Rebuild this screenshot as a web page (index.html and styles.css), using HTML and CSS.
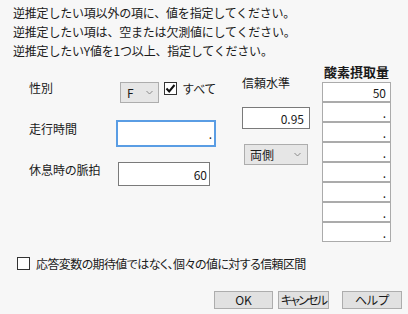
FILE: index.html
```html
<!DOCTYPE html>
<html lang="ja">
  <head>
    <meta charset="UTF-8" />
    <meta name="viewport" content="width=device-width, initial-scale=1.0" />
    <title>逆推定</title>
    <link rel="stylesheet" href="styles.css">
  </head>
  <body>
    <div class="dialog">
      <div class="intro">
        <p>逆推定したい項以外の項に、値を指定してください。</p>
        <p>逆推定したい項は、空または欠測値にしてください。</p>
        <p>逆推定したいY値を1つ以上、指定してください。</p>
      </div>

      <div class="form">
        <div class="fields">
          <div class="row row-sex">
            <span class="label">性別</span>
            <div class="select select-f">
              <span>F</span>
              <svg class="chevron" width="7" height="5" viewBox="0 0 7 5"><path d="M0.5 1 L3.5 4 L6.5 1" fill="none" stroke="#8a8a8a" stroke-width="1"/></svg>
            </div>
            <span class="check-wrap">
              <span class="check">
                <svg width="11" height="11" viewBox="0 0 11 11"><path d="M1.5 5.5 L4.2 8.5 L9.5 2" fill="none" stroke="#111" stroke-width="2"/></svg>
              </span>
              <span>すべて</span>
            </span>
          </div>
          <div class="row row-time">
            <span class="label">走行時間</span>
            <input class="field field-focus" type="text" value=".">
          </div>
          <div class="row row-pulse">
            <span class="label">休息時の脈拍</span>
            <input class="field field-pulse" type="text" value="60">
          </div>
        </div>

        <div class="conf">
          <div class="conf-label">信頼水準</div>
          <input class="field field-conf" type="text" value="0.95">
          <div class="select select-side">
            <span>両側</span>
            <svg class="chevron" width="7" height="5" viewBox="0 0 7 5"><path d="M0.5 1 L3.5 4 L6.5 1" fill="none" stroke="#8a8a8a" stroke-width="1"/></svg>
          </div>
        </div>

        <div class="yvals">
          <div class="yvals-title">酸素摂取量</div>
          <div class="cells">
            <input class="cell" type="text" value="50">
            <input class="cell" type="text" value=".">
            <input class="cell" type="text" value=".">
            <input class="cell" type="text" value=".">
            <input class="cell" type="text" value=".">
            <input class="cell" type="text" value=".">
            <input class="cell" type="text" value=".">
            <input class="cell" type="text" value=".">
          </div>
        </div>
      </div>

      <div class="option">
        <span class="check"></span>
        <span class="option-text">応答変数の期待値ではなく、個々の値に対する信頼区間</span>
      </div>

      <div class="actions">
        <button class="btn btn-ok">OK</button>
        <button class="btn btn-cancel">キャンセル</button>
        <button class="btn btn-help">ヘルプ</button>
      </div>
    </div>
  </body>
</html>
```

FILE: styles.css
```css
body {
  margin: 0;
  padding: 0;
  background-color: #f7f7f7;
  color: #1a1a1a;
  font-family: "Noto Sans CJK JP", "Noto Sans", sans-serif;
  font-size: 12px;
  font-feature-settings: "palt";
}

.dialog {
  width: 408px;
  height: 314px;
}

.intro {
  padding: 3px 0 0 13px;
  line-height: 19px;
  font-feature-settings: normal;
  letter-spacing: -0.2px;
}

.intro p {
  margin: 0;
}

.form {
  display: flex;
  padding-left: 29px;
  height: 182px;
}

/* left column */
.fields {
  width: 213px;
  padding-top: 21px;
}

.row {
  display: flex;
  align-items: center;
}

.label {
  width: 87px;
  line-height: 14px;
  margin-bottom: 9px;
}

.row-time {
  margin-top: 16px;
}

.row-pulse {
  margin-top: 15px;
}

.select {
  display: flex;
  align-items: center;
  justify-content: space-between;
  box-sizing: border-box;
  height: 21px;
  border: 1px solid #adadad;
  background: #e6e6e6;
  padding: 0 5px 0 6px;
}

.select-f {
  width: 39px;
  margin-left: 4px;
}

.check-wrap {
  display: flex;
  align-items: center;
  gap: 6px;
  align-self: flex-start;
  margin-top: 1px;
  margin-left: 5px;
  height: 13px;
  line-height: 13px;
}

.check {
  display: flex;
  align-items: center;
  justify-content: center;
  box-sizing: border-box;
  width: 13px;
  height: 13px;
  border: 1px solid #333;
  background: #fff;
}

.field {
  box-sizing: border-box;
  margin: 0;
  padding: 0 3px;
  font: inherit;
  color: #1a1a1a;
  text-align: right;
  background: #fff;
  border: 1px solid #7a7a7a;
  outline: none;
}

.field-focus {
  width: 100px;
  height: 27px;
  border: 2px solid #5a9de4;
  padding-right: 2px;
}

.field-pulse {
  width: 92px;
  height: 24px;
  margin-left: 2px;
  padding-right: 2px;
}

/* middle column */
.conf {
  width: 80px;
  padding-top: 16px;
}

.conf-label {
  line-height: 14px;
}

.field-conf {
  display: block;
  width: 68px;
  height: 22px;
  margin-top: 17px;
  padding-right: 5px;
}

.select-side {
  width: 64px;
  margin-top: 15px;
  margin-left: 2px;
  padding-left: 5px;
  padding-right: 6px;
}

/* right column */
.yvals {
  width: 69px;
  padding-top: 4px;
}

.yvals-title {
  height: 18px;
  line-height: 16px;
  font-size: 13px;
  font-weight: bold;
  text-align: center;
}

.cells {
  display: flex;
  flex-direction: column;
}

.cell {
  box-sizing: border-box;
  width: 69px;
  height: 20px;
  margin: 0;
  padding: 0 4px;
  font: inherit;
  text-align: right;
  color: #1a1a1a;
  background: #fff;
  border: 1px solid #ababab;
  outline: none;
}

.option {
  display: flex;
  align-items: center;
  gap: 6px;
  margin-top: 15px;
  padding-left: 17px;
  height: 13px;
}

.option-text {
  line-height: 13px;
  letter-spacing: -0.6px;
}

.actions {
  display: flex;
  justify-content: flex-end;
  margin-top: 21px;
  padding-right: 6px;
}

.btn {
  box-sizing: border-box;
  height: 18px;
  padding: 0;
  font: inherit;
  line-height: 16px;
  white-space: nowrap;
  color: #1a1a1a;
  background: #e1e1e1;
  border: 1px solid #adadad;
}

.btn-ok {
  width: 59px;
}

.btn-cancel {
  width: 51px;
  margin-left: 5px;
  letter-spacing: -1.8px;
}

.btn-help {
  width: 60px;
  margin-left: 13px;
}
```
